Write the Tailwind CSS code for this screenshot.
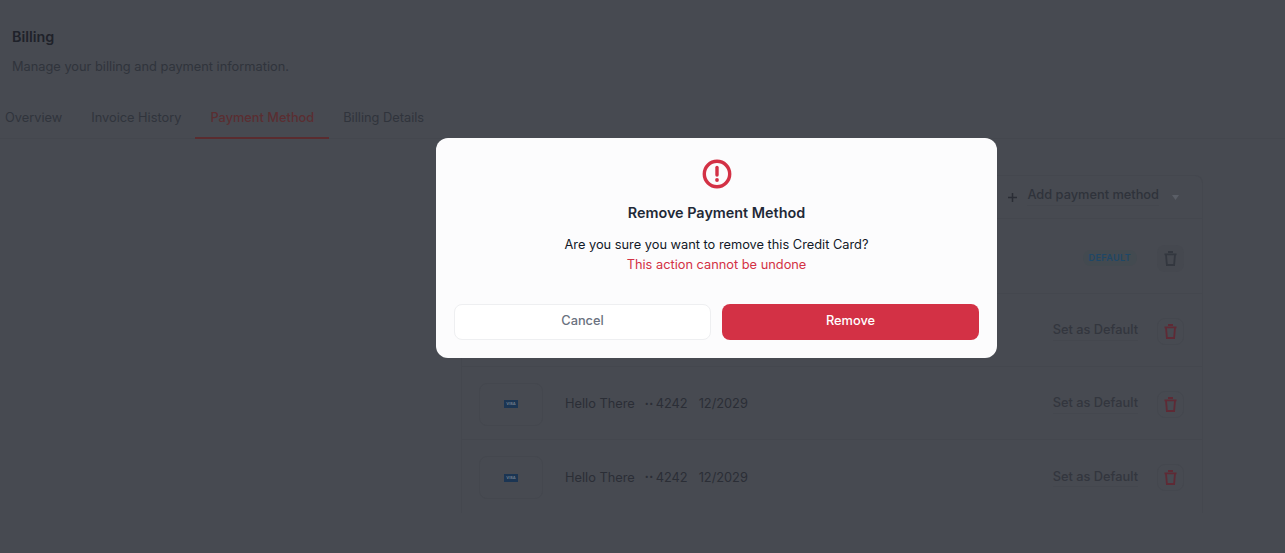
<!DOCTYPE html>
<html lang="en">
<head>
  <meta charset="UTF-8">
  <title>Billing</title>
  <script src="https://cdn.jsdelivr.net/npm/@tailwindcss/browser@4"></script>
</head>
<body class="relative h-[553px] overflow-hidden bg-[#474a51] font-['Inter',sans-serif]">

  <!-- Page, dimmed behind the modal -->
  <div class="h-full">
    <div class="pt-[28px] pl-3">
      <h1 class="text-[14.4px] leading-[18px] font-semibold text-[#1f222a]">Billing</h1>
      <p class="mt-3 text-[12.8px] leading-[18px] text-[#30343c]">Manage your billing and payment information.</p>
    </div>

    <div class="mt-[20px] flex h-[43px] border-b border-[#44474e] text-[12.8px] text-[#30343c]">
      <a class="ml-[5px] pt-[12px] pr-[14px]">Overview</a>
      <a class="pt-[12px] pr-[14px] pl-[15px]">Invoice History</a>
      <a class="h-[43px] border-b-2 border-[#5a2c2f] px-[15px] pt-[12px] font-medium text-[#5a2e31]">Payment Method</a>
      <a class="pt-[12px] pl-[14px]">Billing Details</a>
    </div>

    <div class="mt-[36px] ml-[461px] w-[742px] rounded-t-lg border border-b-0 border-[#44474e]">
      <div class="flex h-[43px] items-center justify-end border-b border-[#44474e] pr-[23px] text-[12.8px] font-medium text-[#2f333b]">
        <svg class="mr-[10px]" width="9" height="9" viewBox="0 0 9 9" fill="none" stroke="#2a2d35" stroke-width="1.5"><path d="M4.5 0v9M0 4.5h9"/></svg>
        <span class="mb-[3px] border-b border-[#44474e]">Add payment method</span>
        <svg class="ml-[13px]" width="7" height="5" viewBox="0 0 7 5" fill="#5a5e66"><path d="M0 0h7L3.5 5z"/></svg>
      </div>

      <div class="flex h-[75px] items-center justify-end border-b border-[#44474e] pt-[4px] pr-[18px]">
        <span class="mr-[20px] rounded-full bg-[#434a50] px-[6px] py-[2px] text-[9px] leading-[12px] font-semibold tracking-[0.4px] text-[#1e4766]">DEFAULT</span>
        <button class="flex h-[27px] w-[27px] items-center justify-center rounded-lg bg-[#45484f]">
          <svg width="13" height="15" viewBox="0 0 13 15" fill="none" stroke="#33373f" stroke-width="1.8"><path d="M4 1h5M.5 3.4h12M2 3.4l.9 10.6h7.2L11 3.4"/></svg>
        </button>
      </div>

      <div class="flex h-[73px] items-center justify-end border-b border-[#44474e] pt-[2px] pr-[18px]">
        <span class="mr-[19px] mb-[1px] border-b border-[#44474e] text-[12.8px] font-medium text-[#33363e]">Set as Default</span>
        <button class="flex h-[27px] w-[27px] items-center justify-center rounded-lg border border-[#44474e]">
          <svg width="13" height="15" viewBox="0 0 13 15" fill="none" stroke="#5e2a35" stroke-width="1.8"><path d="M4 1h5M.5 3.4h12M2 3.4l.9 10.6h7.2L11 3.4"/></svg>
        </button>
      </div>

      <div class="flex h-[73px] items-center border-b border-[#44474e] pt-[2px] pr-[18px] pl-[17px] text-[12.8px] text-[#2b2e36]">
        <div class="flex h-[43px] w-[64px] items-center justify-center rounded-lg border border-[#44474e]">
          <span class="h-[8px] w-[14px] bg-[#1b3553] text-center text-[4px] leading-[8px] font-semibold text-[#77828f]">VISA</span>
        </div>
        <span class="ml-[22px]">Hello There</span>
        <span class="ml-[10px] text-[7px] tracking-[0.5px]">••</span>
        <span class="ml-[2px]">4242</span>
        <span class="ml-[11px]">12/2029</span>
        <span class="mr-[19px] mb-[1px] ml-auto border-b border-[#44474e] font-medium text-[#33363e]">Set as Default</span>
        <button class="flex h-[27px] w-[27px] items-center justify-center rounded-lg border border-[#44474e]">
          <svg width="13" height="15" viewBox="0 0 13 15" fill="none" stroke="#5e2a35" stroke-width="1.8"><path d="M4 1h5M.5 3.4h12M2 3.4l.9 10.6h7.2L11 3.4"/></svg>
        </button>
      </div>

      <div class="flex h-[73px] items-center pt-[2px] pr-[18px] pl-[17px] text-[12.8px] text-[#2b2e36]">
        <div class="flex h-[43px] w-[64px] items-center justify-center rounded-lg border border-[#44474e]">
          <span class="h-[8px] w-[14px] bg-[#1b3553] text-center text-[4px] leading-[8px] font-semibold text-[#77828f]">VISA</span>
        </div>
        <span class="ml-[22px]">Hello There</span>
        <span class="ml-[10px] text-[7px] tracking-[0.5px]">••</span>
        <span class="ml-[2px]">4242</span>
        <span class="ml-[11px]">12/2029</span>
        <span class="mr-[19px] mb-[1px] ml-auto border-b border-[#44474e] font-medium text-[#33363e]">Set as Default</span>
        <button class="flex h-[27px] w-[27px] items-center justify-center rounded-lg border border-[#44474e]">
          <svg width="13" height="15" viewBox="0 0 13 15" fill="none" stroke="#5e2a35" stroke-width="1.8"><path d="M4 1h5M.5 3.4h12M2 3.4l.9 10.6h7.2L11 3.4"/></svg>
        </button>
      </div>
    </div>
  </div>

  <!-- Modal -->
  <div class="absolute top-[138px] left-[436px] h-[220px] w-[561px] rounded-xl bg-[#fcfcfd] px-[18px] pt-[21px] text-center">
    <svg class="mx-auto" width="30" height="30" viewBox="0 0 30 30" fill="none">
      <circle cx="15" cy="15" r="12.7" stroke="#d33145" stroke-width="3.4"/>
      <path d="M15 8.5v7.5" stroke="#d33145" stroke-width="3.4" stroke-linecap="round"/>
      <circle cx="15" cy="21" r="1.9" fill="#d33145"/>
    </svg>
    <h2 class="mt-[15px] text-[14.4px] leading-[18px] font-semibold text-[#1f2937]">Remove Payment Method</h2>
    <p class="mt-[13px] text-[12.8px] leading-[20px] text-[#111827]">Are you sure you want to remove this Credit Card?</p>
    <p class="text-[12.8px] leading-[20px] text-[#d33145]">This action cannot be undone</p>
    <div class="mt-[29px] flex gap-[11px]">
      <button class="h-[36px] w-[257px] rounded-lg border border-[#eeeff1] bg-white pb-[2px] text-[12.8px] font-medium text-[#6b7280]">Cancel</button>
      <button class="h-[36px] w-[257px] rounded-lg bg-[#d33145] pb-[2px] text-[12.8px] font-medium text-white">Remove</button>
    </div>
  </div>

</body>
</html>
